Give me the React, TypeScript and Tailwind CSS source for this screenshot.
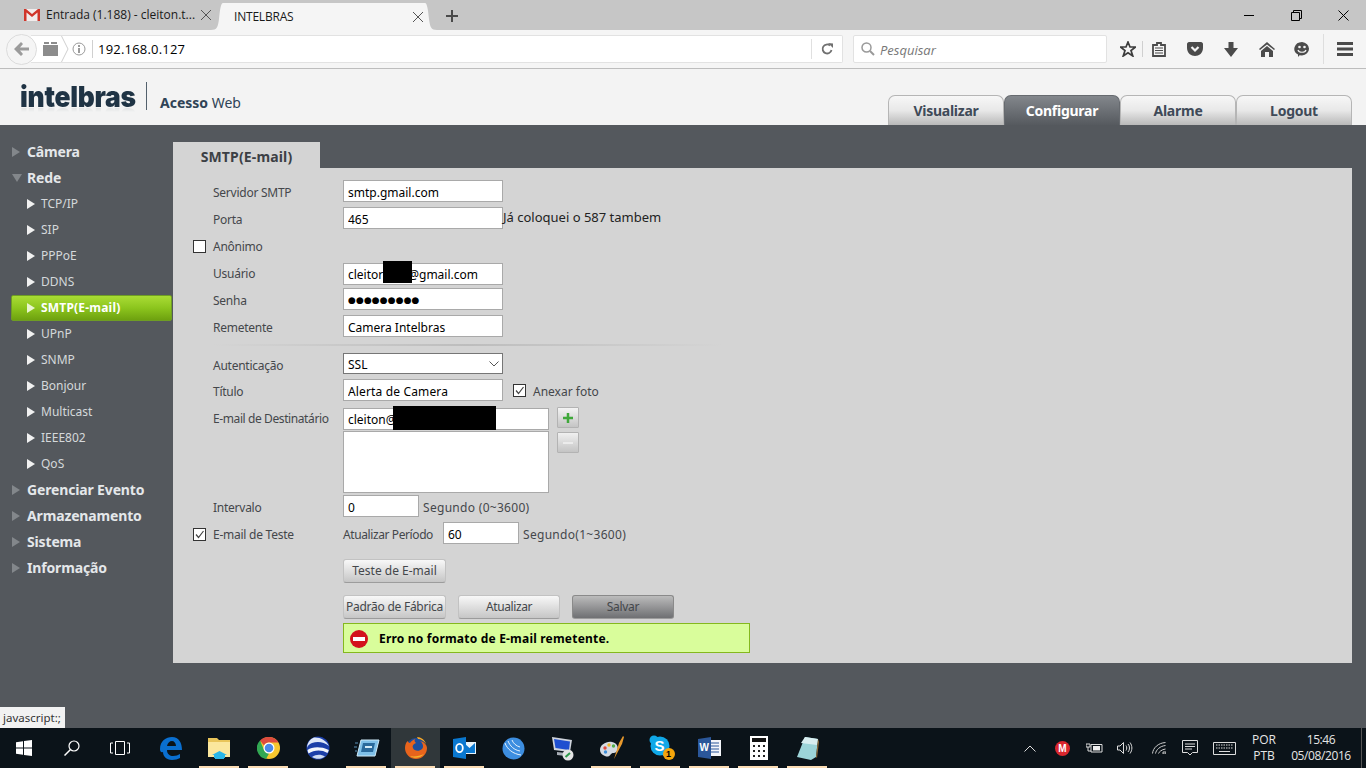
import React from "react";

const Tri = ({ c = "#f1f1f1", s = 8 }: { c?: string; s?: number }) => (
  <svg width={s} height={s + 2} viewBox="0 0 8 10" className="shrink-0"><path d="M0 0L8 5L0 10Z" fill={c} /></svg>
);

const Top = ({ label, open }: { label: string; open?: boolean }) => (
  <div className="h-[26px] flex items-center pl-[12px] gap-[6px]">
    {open ? (
      <svg width="10" height="8" viewBox="0 0 10 8" className="shrink-0 mr-[-1px]"><path d="M0 0H10L5 8Z" fill="#83878b" /></svg>
    ) : (
      <span className="w-[9px] flex"><Tri c="#83878b" /></span>
    )}
    <span className="text-[14px] font-bold text-[#e4e7ea] leading-none tracking-[-0.15px]">{label}</span>
  </div>
);

const Sub = ({ label, active }: { label: string; active?: boolean }) =>
  active ? (
    <div className="h-[26px] flex items-center">
      <div className="ml-[11px] w-[161px] h-[26px] flex items-center pl-[15px] gap-[6px] rounded-[2px] border border-[#6f9d24] bg-gradient-to-b from-[#a9dc34] via-[#8cc51d] to-[#6ea10f]">
        <Tri c="#e9f5cf" />
        <span className="text-[12px] font-bold text-white leading-none tracking-[0.2px]">{label}</span>
      </div>
    </div>
  ) : (
    <div className="h-[26px] flex items-center pl-[27px] gap-[6px]">
      <Tri />
      <span className="text-[12px] text-[#d5d8db] leading-none">{label}</span>
    </div>
  );

const txt = "h-[22px] flex items-center pt-[4px] text-[12px] text-[#44474b] leading-none whitespace-nowrap";

const Label = ({ children, check, track = "tracking-[-0.25px]" }: { children: React.ReactNode; check?: boolean | "off"; track?: string }) => (
  <div className="flex items-center shrink-0 h-[22px]">
    <div className="w-[20px] flex pt-[2px]">
      {check && <Check on={check !== "off"} />}
    </div>
    <span className={`w-[130px] ${txt} ${track}`}>{children}</span>
  </div>
);

const Check = ({ on }: { on: boolean }) => (
  <span className="w-[13px] h-[13px] border border-[#333] bg-white flex items-center justify-center shrink-0">
    {on && (
      <svg width="11" height="11" viewBox="0 0 11 11"><path d="M2 5.500L4.500 8.500L9.500 2" stroke="#444" strokeWidth="1.200" fill="none" /></svg>
    )}
  </span>
);

const Field = ({ value, w = "w-[160px]", extra = "text-[12px] font-['Noto_Sans',sans-serif]" }: { value: string; w?: string; extra?: string }) => (
  <input
    readOnly
    type="text"
    value={value}
    className={`${w} h-[22px] border border-[#a9a9a9] bg-white pl-[4px] pr-[2px] pt-[2px] text-black outline-none ${extra}`}
  />
);

const Row = ({ children, h = "h-[27px]" }: { children: React.ReactNode; h?: string }) => (
  <div className={`${h} flex items-start pt-[2px]`}>{children}</div>
);

const Btn = ({ label, dark, w = "w-[102px]", track = "" }: { label: string; dark?: boolean; w?: string; track?: string }) => (
  <div
    className={`${w} h-[24px] flex items-center justify-center rounded-[3px] text-[12px] leading-none text-[#44474b] whitespace-nowrap border-b border-b-[#9c9c9c] ${track} ${
      dark ? "bg-gradient-to-b from-[#bcbcbc] to-[#6f7073] border border-[#8a8a8a]" : "bg-gradient-to-b from-[#f8f8f8] to-[#c6c6c6] border border-[#c2c2c2]"
    }`}
  >
    {label}
  </div>
);

const NavTab = ({ label, active }: { label: string; active?: boolean }) => (
  <div
    className={`w-[116px] h-[30px] rounded-t-[7px] flex items-center justify-center text-[14px] font-bold tracking-[-0.25px] border border-b-0 ${
      active
        ? "bg-gradient-to-b from-[#83878c] to-[#565a5f] text-white border-[#666a6f]"
        : "bg-gradient-to-b from-[#f7f7f7] via-[#e8e8e8] to-[#b9b9b9] text-[#3f4a58] border-[#b5b5b5]"
    }`}
  >
    {label}
  </div>
);

const TIcon = ({ children, bar, active }: { children: React.ReactNode; bar?: boolean; active?: boolean }) => (
  <div className={`w-[49px] h-[40px] flex items-center justify-center relative ${active ? "bg-[#30373a]" : ""}`}>
    {children}
    {bar && <div className="absolute bottom-0 left-[4px] w-[40px] h-[2px] bg-[#fbdcb4]" />}
  </div>
);

const Edge = () => (
  <svg width="24" height="24" viewBox="0 0 24 24">
    <path d="M1 13C1 5 7 1 13 1C20 1 23 7 23 14H8C8 18 11 20 14 20C17 20 19 19 21 18V22C19 23 16 24 13 24C7 24 4 20 4 16C2 17 1 15 1 13ZM8 10H17C17 7 15 5 13 5C10.500 5 8.500 7 8 10Z" fill="#0a6fd0" />
  </svg>
);
const Folder = () => (
  <svg width="23" height="22" viewBox="0 0 23 22">
    <path d="M0 1H9L11 3H22V20H0Z" fill="#e9c55a" />
    <path d="M0 5H22V20H0Z" fill="#fbe79d" />
    <path d="M6 14H17V17H19L11.500 21L4 17H6Z" fill="#29b6e8" transform="rotate(180 11.500 17.500)" />
    <path d="M7 21H16V22H7Z" fill="#29b6e8" />
  </svg>
);
const Chrome = () => (
  <svg width="24" height="24" viewBox="0 0 24 24">
    <circle cx="12" cy="12" r="11" fill="#f7c72e" />
    <path d="M12 1A11 11 0 0 1 21.500 6.500H12A5.500 5.500 0 0 0 7 9.500L3 4.500A11 11 0 0 1 12 1Z" fill="#dd4b3e" />
    <path d="M3 4.500L7.500 15A5.500 5.500 0 0 0 12 17.500L9 23A11 11 0 0 1 3 4.500Z" fill="#32a853" />
    <circle cx="12" cy="12" r="5.500" fill="#fff" />
    <circle cx="12" cy="12" r="4.300" fill="#4a89e8" />
  </svg>
);
const Earth = () => (
  <svg width="24" height="24" viewBox="0 0 24 24">
    <circle cx="12" cy="12" r="11.500" fill="#1c3fa8" />
    <path d="M8 1.500C14 1 20 4 23 10C18 6 12 5 6 7C3 8 1.500 10 1 12C1 7 4 3 8 1.500Z" fill="#dfe8f8" />
    <path d="M1.500 14C6 11 14 10 22.800 14C22.500 15 22 16 21.500 17C15 13 8 14 2.500 17.500C2 16.500 1.700 15 1.500 14Z" fill="#f4f7fc" />
    <path d="M6 21C10 18 15 18 19 20.500C15 23.500 10 23.500 6 21Z" fill="#cfdcf2" />
  </svg>
);
const Rdp = () => (
  <svg width="26" height="18" viewBox="0 0 26 18">
    <path d="M1 4H4M0 8H3M1 12H3" stroke="#5a91b8" strokeWidth="1" />
    <path d="M7 1H25L21 17H3Z" fill="#7fc0e8" stroke="#cfeaf8" />
    <path d="M9 4H21L19 13H7Z" fill="#2a6a9c" />
    <path d="M11 7H18V9H11Z" fill="#d4ecf8" />
  </svg>
);
const Firefox = () => (
  <svg width="24" height="24" viewBox="0 0 24 24">
    <circle cx="12" cy="12" r="10" fill="#1d4e9c" />
    <path d="M12 23A11 11 0 0 1 1 12C1 9 2 6 4 5C4 6 5 7 6 7C7 5 9 4 11 3C10 5 11 6 12 7C9 8 8 10 9 12C10 15 15 16 18 13C20 11 19 7 16 5C20 6 23 9 23 12A11 11 0 0 1 12 23Z" fill="#e8641c" />
    <path d="M6 20C10 23 17 22 20 18C16 20 10 21 6 20Z" fill="#f7b42c" />
    <path d="M13 1C17 1 21 4 22 8C20 5 17 3 14 3Z" fill="#f9a825" />
  </svg>
);
const Outlook = () => (
  <svg width="24" height="22" viewBox="0 0 24 22">
    <path d="M10 5H23V17H10Z" fill="#e8f4fb" />
    <path d="M11 6L16.500 11L22 6V16H11Z" fill="#0a78d0" />
    <path d="M0 2L13 0V22L0 20Z" fill="#0a78d0" />
    <ellipse cx="6.500" cy="11" rx="3.300" ry="4.200" fill="none" stroke="#fff" strokeWidth="1.800" />
  </svg>
);
const Winbox = () => (
  <svg width="23" height="23" viewBox="0 0 23 23">
    <circle cx="11.500" cy="11.500" r="11" fill="#3d8ee0" />
    <path d="M3 6C5 12 11 17 19 18M6 4C8 9 12 13 18 14M10 3C11 6 14 9 18 10" stroke="#e6f2fc" strokeWidth="1" fill="none" />
  </svg>
);
const Net = () => (
  <svg width="24" height="26" viewBox="0 0 24 26">
    <path d="M1 2L21 5L19 17L3 15Z" fill="#cfd4dc" />
    <path d="M3 4L19 6.500L18 15L4.500 13Z" fill="#1e4fd0" />
    <path d="M6 17L15 18V21L6 20Z" fill="#a8adb5" />
    <circle cx="17" cy="20" r="5.500" fill="#e4e4e4" />
    <path d="M14.500 22L19 18" stroke="#2f9a4a" strokeWidth="2" />
  </svg>
);
const Paint = () => (
  <svg width="26" height="26" viewBox="0 0 26 26">
    <path d="M1 15C1 10 7 6 13 7C18 8 20 12 18 16C16 19 14 17 12 19C10 22 8 22 6 21C3 20 1 18 1 15Z" fill="#d5dbe3" />
    <circle cx="6" cy="13" r="1.700" fill="#e24a3a" />
    <circle cx="10" cy="10" r="1.700" fill="#f0b92c" />
    <circle cx="14.500" cy="11" r="1.700" fill="#53b04a" />
    <circle cx="6.500" cy="17" r="1.700" fill="#3e8ed8" />
    <path d="M15 24L20 8L24 1L25 2L23 9Z" fill="#e99a2d" />
  </svg>
);
const Skype = () => (
  <div className="relative w-[24px] h-[24px] mt-[-2px]">
    <svg width="22" height="22" viewBox="0 0 22 22">
      <circle cx="11" cy="11" r="9.500" fill="#10a8e8" />
      <circle cx="5" cy="5" r="4.500" fill="#10a8e8" />
      <circle cx="17" cy="17" r="4.500" fill="#10a8e8" />
    </svg>
    <span className="absolute left-0 top-[1px] w-[22px] text-center text-[15px] font-bold leading-[20px] text-white font-['Liberation_Sans',sans-serif]">S</span>
    <span className="absolute left-[14px] top-[13px] w-[12px] h-[12px] rounded-full bg-[#f5a50b] text-black text-[9px] font-bold leading-[12px] text-center font-['Liberation_Sans',sans-serif]">1</span>
  </div>
);
const Word = () => (
  <div className="relative w-[24px] h-[22px]">
    <svg width="24" height="22" viewBox="0 0 24 22">
      <path d="M9 3H23V19H9Z" fill="#f4f6fa" />
      <path d="M12 6H21M12 9H21M12 12H21M12 15H21" stroke="#2b579a" strokeWidth="1.200" />
      <path d="M0 2L13 0V22L0 20Z" fill="#2b579a" />
    </svg>
    <span className="absolute left-[2px] top-[5px] text-[10px] font-bold leading-[12px] text-white font-['Liberation_Sans',sans-serif]">W</span>
  </div>
);
const Calc = () => (
  <svg width="18" height="24" viewBox="0 0 18 24">
    <path d="M0 0H18V24H0Z" fill="#fff" />
    <path d="M2 2H16V6H2Z" fill="#111" />
    <path d="M3 9H5V11H3ZM8 9H10V11H8ZM13 9H15V11H13ZM3 14H5V16H3ZM8 14H10V16H8ZM13 14H15V16H13ZM3 19H5V21H3ZM8 19H10V21H8ZM13 19H15V21H13Z" fill="#222" />
  </svg>
);
const Note = () => (
  <svg width="24" height="24" viewBox="0 0 24 24">
    <path d="M9 1L22 3L20 21L15 24L1 21Z" fill="#9cd4d8" />
    <path d="M9 1L22 3L21 9L5 7Z" fill="#d9eef0" />
    <path d="M22 3L23 6L21 22L20 21Z" fill="#8d6a3a" />
  </svg>
);

const gray = "#4b4b4b";

export default function App() {
  const subs1 = ["TCP/IP", "SIP", "PPPoE", "DDNS"];
  const subs2 = ["UPnP", "SNMP", "Bonjour", "Multicast", "IEEE802", "QoS"];
  return (
    <div className="w-[1366px] h-[768px] overflow-hidden flex flex-col font-['Noto_Sans',sans-serif] bg-[#54585d]">
      {/* tab strip */}
      <div className="h-[30px] shrink-0 bg-[#c6c6c6] flex items-end pl-[24px]">
        <div className="w-[187px] h-[30px] flex items-center font-['Open_Sans',sans-serif] text-[12px] text-[#1a1a1a]">
          <svg width="16" height="12" viewBox="0 0 16 12" className="mr-[6px] shrink-0">
            <path d="M0 0H16V12H0Z" fill="#f1ecec" />
            <path d="M0 0H2L8 5L14 0H16V12H13.500V3.500L8 8L2.500 3.500V12H0Z" fill="#d0352a" />
          </svg>
          <span className="w-[157px] truncate">Entrada (1.188) - cleiton.t...</span>
          <svg width="10" height="10" viewBox="0 0 10 10" className="shrink-0"><path d="M0 0L10 10M10 0L0 10" stroke="#555" /></svg>
        </div>
        <svg width="12" height="27" viewBox="0 0 12 27" className="shrink-0"><path d="M0 27C6 27 7 24 8 16C9 6 10 0 12 0V27Z" fill="#f5f5f5" /></svg>
        <div className="w-[202px] h-[27px] bg-[#f5f5f5] flex items-center pl-[11px] pr-[2px] justify-between font-['Open_Sans',sans-serif] text-[12px] text-[#1a1a1a]">
          <span className="tracking-[-0.2px]">INTELBRAS</span>
          <svg width="10" height="10" viewBox="0 0 10 10"><path d="M0 0L10 10M10 0L0 10" stroke="#555" /></svg>
        </div>
        <svg width="12" height="27" viewBox="0 0 12 27" className="shrink-0"><path d="M12 27C6 27 5 24 4 16C3 6 2 0 0 0V27Z" fill="#f5f5f5" /></svg>
        <svg width="12" height="12" viewBox="0 0 12 12" className="ml-[9px] mb-[8px]"><path d="M6 0V12M0 6H12" stroke="#4a4a4a" strokeWidth="2" /></svg>
        <div className="ml-auto h-[30px] flex items-start">
          <div className="w-[47px] h-[30px] flex items-center justify-center"><div className="w-[10px] h-px bg-black mr-[2px]" /></div>
          <div className="w-[47px] h-[30px] flex items-center justify-center">
            <svg width="11" height="11" viewBox="0 0 11 11"><path d="M0.500 2.500H8.500V10.500H0.500ZM2.500 2.500V0.500H10.500V8.500H8.500" fill="none" stroke="#000" /></svg>
          </div>
          <div className="w-[46px] h-[30px] flex items-center justify-center">
            <svg width="11" height="11" viewBox="0 0 11 11"><path d="M0.500 0.500L10.500 10.500M10.500 0.500L0.500 10.500" stroke="#000" /></svg>
          </div>
        </div>
      </div>
      {/* nav bar */}
      <div className="h-[39px] shrink-0 bg-[#f5f5f5] border-b border-[#bdbdbd] flex items-center pl-[6px]">
        <div className="relative z-10 w-[31px] h-[31px] rounded-full bg-[#f5f5f5] border border-[#dcdcdc] flex items-center justify-center">
          <svg width="16" height="14" viewBox="0 0 16 14"><path d="M7 0L9 2L6 5.500H15V8.500H6L9 12L7 14L0 7Z" fill="#9b9b9b" /></svg>
        </div>
        <div className="w-[812px] h-[28px] ml-[-6px] bg-white border-y border-r border-[#e2e2e2] flex items-center rounded-r-[2px]">
          <svg width="15" height="14" viewBox="0 0 15 14" className="ml-[12px]"><path d="M0 3H15V14H0ZM1 0H6V2H1ZM8 0H14V2H8Z" fill="#8c8c8c" /></svg>
          <svg width="8" height="26" viewBox="0 0 8 26" className="ml-[3px]"><path d="M0.500 0L7 13L0.500 26" stroke="#cfcfcf" fill="none" /></svg>
          <svg width="14" height="14" viewBox="0 0 14 14" className="ml-[3px]"><circle cx="7" cy="7" r="6" fill="none" stroke="#9a9a9a" /><path d="M6 3H8V5H6ZM6 6H8V11H6Z" fill="#9a9a9a" /></svg>
          <div className="w-px h-[18px] bg-[#d0d0d0] ml-[6px]" />
          <span className="ml-[5px] pt-[2px] text-[13px] text-black font-['Open_Sans',sans-serif] tracking-[0.2px]">192.168.0.127</span>
          <div className="ml-auto w-px h-[20px] bg-[#e0e0e0]" />
          <svg width="12" height="12" viewBox="0 0 12 12" className="mx-[9px]"><path d="M10.500 7A4.500 4.500 0 1 1 9 2.500" fill="none" stroke="#707070" strokeWidth="1.800" /><path d="M7 0L12 0.500V5Z" fill="#707070" /></svg>
        </div>
        <div className="w-[254px] h-[28px] ml-[10px] bg-white border border-[#e2e2e2] rounded-[2px] flex items-center pl-[7px] gap-[5px]">
          <svg width="14" height="14" viewBox="0 0 14 14"><circle cx="5.500" cy="5.500" r="4.500" fill="none" stroke="#999" strokeWidth="1.500" /><path d="M9 9L13 13" stroke="#999" strokeWidth="2" /></svg>
          <span className="pt-[3px] text-[13px] italic text-[#777] font-['Open_Sans',sans-serif]">Pesquisar</span>
        </div>
        <div className="flex items-center ml-[13px]">
          <svg width="16" height="16" viewBox="0 0 16 16"><path d="M8 1L10 6H15.500L11 9.500L12.800 15L8 11.700L3.200 15L5 9.500L0.500 6H6Z" fill="none" stroke="#3d3d3d" strokeWidth="1.700" /></svg>
          <div className="w-px h-[16px] bg-[#d0d0d0] ml-[6px]" />
          <svg width="14" height="15" viewBox="0 0 14 15" className="ml-[9px]"><path d="M1 3H5V1H9V3H13V14H1Z" fill="none" stroke={gray} strokeWidth="1.800" /><path d="M3 6H11M3 8.500H11M3 11H11" stroke={gray} /></svg>
          <svg width="16" height="14" viewBox="0 0 16 14" className="ml-[21px]"><path d="M0 2C0 1 1 0 2 0H14C15 0 16 1 16 2V6C16 11 12 14 8 14C4 14 0 11 0 6Z" fill={gray} /><path d="M4.500 5L8 8.500L11.500 5" stroke="#f5f5f5" strokeWidth="2.200" fill="none" /></svg>
          <svg width="14" height="15" viewBox="0 0 14 15" className="ml-[21px]"><path d="M4.500 0H9.500V6H14L7 15L0 6H4.500Z" fill={gray} /></svg>
          <svg width="16" height="15" viewBox="0 0 16 15" className="ml-[21px]"><path d="M8 0L16 7L15 8L8 2.500L1 8L0 7Z" fill={gray} /><path d="M8 4L14 9V15H10V10H6V15H2V9Z" fill={gray} /></svg>
          <svg width="16" height="15" viewBox="0 0 16 15" className="ml-[19px]"><path d="M8 0A8 6.800 0 0 1 8 13.500L5.500 13.200L4 15V12.500A8 6.800 0 0 1 8 0Z" fill={gray} /><circle cx="5.500" cy="5" r="1.300" fill="#f5f5f5" /><circle cx="10.500" cy="5" r="1.300" fill="#f5f5f5" /><path d="M4 8C5 11 11 11 12 8" stroke="#f5f5f5" strokeWidth="1.200" fill="none" /></svg>
          <div className="w-px h-[30px] bg-[#dedede] ml-[13px]" />
          <svg width="16" height="14" viewBox="0 0 16 14" className="ml-[13px]"><path d="M0 0H16V3H0ZM0 5.500H16V8.500H0ZM0 11H16V14H0Z" fill={gray} /></svg>
        </div>
      </div>
      {/* page header */}
      <div className="h-[56px] shrink-0 bg-[#f3f3f3] flex items-end pr-[14px]">
        <div className="self-start flex items-start pl-[20px] pt-[13px]">
          <div className="w-[115px]">
            <span className="inline-block origin-left scale-x-[0.91] text-[29px] leading-[30px] font-black text-[#1f3344] font-['Inter',sans-serif] tracking-[-0.3px] [-webkit-box-reflect:below_-9px_linear-gradient(transparent_70%,rgba(0,0,0,0.18))]">intelbras</span>
          </div>
          <div className="w-px h-[28px] bg-[#52606c] ml-[11px]" />
          <span className="ml-[13px] mt-[12px] text-[14px] leading-[18px] font-bold text-[#2f4356]">Acesso <span className="font-normal">Web</span></span>
        </div>
        <div className="ml-auto flex">
          <NavTab label="Visualizar" />
          <NavTab label="Configurar" active />
          <NavTab label="Alarme" />
          <NavTab label="Logout" />
        </div>
      </div>
      {/* main */}
      <div className="flex-1 min-h-0 flex relative">
        <div className="w-[173px] shrink-0 pt-[14px]">
          <Top label="Câmera" />
          <Top label="Rede" open />
          {subs1.map((s) => <Sub key={s} label={s} />)}
          <Sub label="SMTP(E-mail)" active />
          {subs2.map((s) => <Sub key={s} label={s} />)}
          <Top label="Gerenciar Evento" />
          <Top label="Armazenamento" />
          <Top label="Sistema" />
          <Top label="Informação" />
        </div>
        <div className="w-[1179px] pt-[17px]">
          <div className="w-[147px] h-[26px] pt-[2px] bg-[#d4d4d4] flex items-center justify-center text-[14px] font-bold tracking-[0.15px] text-[#3c4045]">SMTP(E-mail)</div>
          <div className="h-[495px] bg-[#d4d4d4] pl-[20px] pt-[10px]">
            <Row><Label>Servidor SMTP</Label><Field value="smtp.gmail.com" /></Row>
            <Row>
              <Label>Porta</Label>
              <Field value="465" />
              <span className="h-[22px] flex items-center pb-[2px] text-[13px] text-[#222] leading-none whitespace-nowrap">Já coloquei o 587 tambem</span>
            </Row>
            <Row><Label check="off">Anônimo</Label></Row>
            <Row>
              <Label>Usuário</Label>
              <div className="relative">
                <Field value="cleitor        @gmail.com" />
                <div className="absolute left-[40px] top-0 w-[29px] h-[22px] bg-black" />
              </div>
            </Row>
            <Row>
              <Label>Senha</Label>
              <Field value="●●●●●●●●●" extra="text-[9px] tracking-[0.1px] font-['DejaVu_Sans',sans-serif]" />
            </Row>
            <Row><Label>Remetente</Label><Field value="Camera Intelbras" /></Row>
            <div className="h-[11px] flex items-end pb-[5px]">
              <div className="ml-[20px] w-[510px] h-[2px] bg-gradient-to-r from-transparent via-[#bdbdbd] to-transparent" />
            </div>
            <Row h="h-[26px]">
              <Label>Autenticação</Label>
              <div className="relative w-[160px] h-[21px] border border-[#767676] bg-white flex items-center pl-[4px] pt-[3px] text-[12px] text-black">
                SSL
                <svg width="10" height="6" viewBox="0 0 10 6" className="absolute right-[3px] top-[7px]"><path d="M0.500 0.500L5 5L9.500 0.500" stroke="#555" fill="none" /></svg>
              </div>
            </Row>
            <Row>
              <Label>Título</Label>
              <Field value="Alerta de Camera" extra="text-[12px] tracking-[0.15px] font-['Noto_Sans',sans-serif]" />
              <span className="ml-[10px] h-[22px] flex items-center"><Check on /></span>
              <span className={`ml-[7px] ${txt}`}>Anexar foto</span>
            </Row>
            <Row>
              <Label track="tracking-[-0.4px]">E-mail de Destinatário</Label>
              <div className="relative">
                <Field value="cleiton@" w="w-[206px]" />
                <div className="absolute left-[50px] top-0 w-[103px] h-[24px] bg-black" />
              </div>
              <div className="ml-[8px] mt-px w-[22px] h-[21px] border border-[#b3b3b3] rounded-[1px] bg-gradient-to-b from-[#f4f4f4] to-[#c4c4c4] flex items-center justify-center">
                <svg width="10" height="10" viewBox="0 0 10 10"><path d="M5 0V10M0 5H10" stroke="#3fa83a" strokeWidth="2.500" /></svg>
              </div>
            </Row>
            <div className="h-[62px] flex items-start">
              <div className="w-[150px]" />
              <div className="w-[206px] h-[62px] border border-[#a9a9a9] bg-white" />
              <div className="ml-[8px] mt-px w-[22px] h-[21px] border border-[#b3b3b3] rounded-[1px] bg-gradient-to-b from-[#f0f0f0] to-[#c4c4c4] flex items-center justify-center">
                <div className="w-[10px] h-[2px] bg-[#ececec]" />
              </div>
            </div>
            <Row>
              <Label>Intervalo</Label>
              <Field value="0" w="w-[76px]" />
              <span className={`ml-[4px] ${txt} tracking-[0.3px]`}>Segundo (0~3600)</span>
            </Row>
            <Row>
              <Label check>E-mail de Teste</Label>
              <span className={`w-[100px] ${txt} tracking-[-0.4px]`}>Atualizar Período</span>
              <Field value="60" w="w-[76px]" />
              <span className={`ml-[4px] ${txt} tracking-[0.3px]`}>Segundo(1~3600)</span>
            </Row>
            <div className="pl-[150px] pt-[12px]"><Btn label="Teste de E-mail" w="w-[103px]" /></div>
            <div className="pl-[150px] pt-[12px] flex gap-[12px]">
              <Btn label="Padrão de Fábrica" w="w-[103px]" track="tracking-[-0.25px]" />
              <Btn label="Atualizar" track="tracking-[-0.4px]" />
              <Btn label="Salvar" dark track="tracking-[-0.3px]" />
            </div>
            <div className="ml-[150px] mt-[4px] w-[407px] h-[30px] bg-[#d9fd9b] border border-[#84b81e] flex items-center pl-[6px] pt-[1px]">
              <svg width="18" height="18" viewBox="0 0 18 18"><circle cx="9" cy="9" r="9" fill="#d3121c" /><path d="M3 7H15V11H3Z" fill="#fff" /></svg>
              <span className="ml-[11px] text-[12px] font-bold text-black leading-none tracking-[0.2px]">Erro no formato de E-mail remetente.</span>
            </div>
          </div>
        </div>
        <div className="absolute left-0 bottom-0 w-[65px] h-[21px] bg-[#f2f2f2] flex items-center pl-[3px] text-[11.500px] text-[#333]">javascript:;</div>
      </div>
      {/* taskbar */}
      <div className="h-[40px] shrink-0 bg-[#0b1319] flex items-center text-white">
        <div className="w-[48px] flex justify-center">
          <svg width="16" height="16" viewBox="0 0 16 16"><path d="M0 2.200L7 1.200V7.500H0ZM8 1L16 0V7.500H8ZM0 8.500H7V14.800L0 13.800ZM8 8.500H16V16L8 15Z" fill="#fff" /></svg>
        </div>
        <div className="w-[48px] flex justify-center">
          <svg width="16" height="16" viewBox="0 0 16 16"><circle cx="10" cy="6" r="5" fill="none" stroke="#fff" strokeWidth="1.200" /><path d="M6.500 9.500L0.500 15.500" stroke="#fff" strokeWidth="1.500" /></svg>
        </div>
        <div className="w-[48px] flex justify-center">
          <svg width="20" height="14" viewBox="0 0 20 14"><path d="M5.500 0.500H14.500V13.500H5.500ZM3 2H0.500V12H3M17 2H19.500V12H17" fill="none" stroke="#fff" /></svg>
        </div>
        <div className="w-[2px]" />
        <TIcon><Edge /></TIcon>
        <TIcon bar><Folder /></TIcon>
        <TIcon bar><Chrome /></TIcon>
        <TIcon><Earth /></TIcon>
        <TIcon bar><Rdp /></TIcon>
        <TIcon bar active><Firefox /></TIcon>
        <TIcon bar><Outlook /></TIcon>
        <TIcon><Winbox /></TIcon>
        <TIcon><Net /></TIcon>
        <TIcon bar><Paint /></TIcon>
        <TIcon bar><Skype /></TIcon>
        <TIcon bar><Word /></TIcon>
        <TIcon bar><Calc /></TIcon>
        <TIcon bar><Note /></TIcon>
        <div className="ml-auto flex items-center h-full">
          <svg width="12" height="7" viewBox="0 0 12 7"><path d="M0.500 6.500L6 1L11.500 6.500" stroke="#ddd" fill="none" /></svg>
          <div className="relative ml-[19px] w-[15px] h-[15px] rounded-full bg-[#d9272e] text-center text-[10px] font-bold leading-[15px] font-['Liberation_Sans',sans-serif]">M</div>
          <svg width="17" height="12" viewBox="0 0 17 12" className="ml-[16px]"><path d="M5 2.500H16V10H5ZM0 2H4V5H0ZM2 5V9H5" fill="none" stroke="#ddd" /><path d="M7 4H14V8.500H7Z" fill="#eee" /></svg>
          <svg width="16" height="14" viewBox="0 0 16 14" className="ml-[14px]"><path d="M0.500 5H3L6.500 1.500V12.500L3 9H0.500ZM9 4.500C10 6 10 8 9 9.500M11 3C13 5 13 9 11 11M13 1.500C15.500 5 15.500 9 13 12.500" fill="none" stroke="#ddd" /></svg>
          <svg width="14" height="12" viewBox="0 0 14 12" className="ml-[19px]"><path d="M0.500 11.500C1 6 6 1 13.500 0.500M3.500 11.500C4 8 8 4 13.500 3.500M6.500 11.500C7 10 9.500 7.500 13.500 7M11 10H14V12H11Z" fill="none" stroke="#ccc" /></svg>
          <svg width="16" height="16" viewBox="0 0 16 16" className="ml-[16px]"><path d="M0.500 0.500H15.500V12.500H10.500L8 15L5.500 12.500H0.500ZM3 4H13M3 6.500H13M3 9H10" fill="none" stroke="#ddd" /></svg>
          <svg width="23" height="13" viewBox="0 0 23 13" className="ml-[15px]"><path d="M0.500 0.500H22.500V12.500H0.500Z" fill="none" stroke="#ddd" /><path d="M3 3H20M3 6H20" stroke="#ddd" strokeDasharray="1.500 1" /><path d="M6 9.500H17" stroke="#ddd" /></svg>
          <div className="ml-[14px] w-[28px] text-center text-[12px] leading-[16px] text-[#e6e6e6] font-['Open_Sans',sans-serif]">POR<br />PTB</div>
          <div className="ml-[11px] w-[64px] text-center text-[12px] leading-[16px] text-[#e6e6e6] tracking-[-0.4px] font-['Open_Sans',sans-serif]">15:46<br />05/08/2016</div>
          <div className="ml-[8px] w-[5px] h-full border-l border-[#555]" />
        </div>
      </div>
    </div>
  );
}
